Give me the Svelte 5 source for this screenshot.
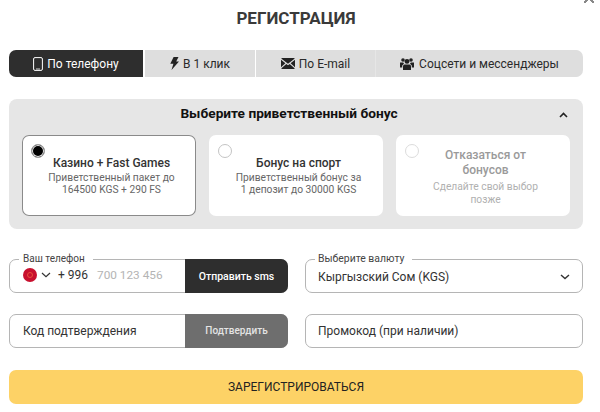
<script lang="ts">
	const tabs = [
		{ id: 'phone', label: 'По телефону' },
		{ id: 'bolt', label: 'В 1 клик' },
		{ id: 'mail', label: 'По E-mail' },
		{ id: 'users', label: 'Соцсети и мессенджеры' }
	];
</script>

<div class="page">
	<span class="close" aria-hidden="true"></span>
	<h1>РЕГИСТРАЦИЯ</h1>

	<nav class="tabs">
		{#each tabs as tab, i}
			<button class="tab" class:active={i === 0}>
				{#if tab.id === 'phone'}
					<svg width="10" height="14" viewBox="0 0 10 14"><rect x="0.6" y="0.6" width="8.8" height="12.8" rx="1.4" fill="none" stroke="currentColor" stroke-width="1" /><path d="M3 12h4" stroke="currentColor" stroke-width="0.8" /></svg>
				{:else if tab.id === 'bolt'}
					<svg width="9" height="13" viewBox="0 0 9 13"><path d="M3.6 0h4.9L6.200 4.400H9L1.500 13l1.900-6.300H0.300z" fill="#222" /></svg>
				{:else if tab.id === 'mail'}
					<svg width="14" height="11" viewBox="0 0 14 11"><path d="M1 0h12a1 1 0 0 1 .8.400L7 5.800.2.400A1 1 0 0 1 1 0zM0 1.700 4.400 5.200 0 9.200zM14 1.700v7.500L9.600 5.200zM5.300 6 7 7.300 8.700 6 13.800 10.600a1 1 0 0 1-.8.400H1a1 1 0 0 1-.8-.400z" fill="#222" /></svg>
				{:else}
					<svg width="14" height="12" viewBox="0 0 14 12"><circle cx="7" cy="3.400" r="2.400" fill="#222" /><circle cx="3" cy="2" r="1.800" fill="#222" /><circle cx="11" cy="2" r="1.800" fill="#222" /><path d="M4.500 6.400h5c1 0 1.500 1 1.500 2.200V12H3V8.600C3 7.400 3.500 6.400 4.500 6.400z" fill="#222" /><path d="M0 4.400h3.200L4 5.800 2.200 7.600V9.500H0zM14 4.400h-3.200L10 5.800l1.800 1.800V9.500H14z" fill="#222" /></svg>
				{/if}
				<span>{tab.label}</span>
			</button>
		{/each}
	</nav>

	<section class="bonus">
		<header>
			<strong>Выберите приветственный бонус</strong>
			<svg class="caret" width="9" height="6" viewBox="0 0 9 6"><path d="M1 5l3.500-3.500L8 5" fill="none" stroke="#222" stroke-width="1.600" /></svg>
		</header>
		<div class="cards">
			<article class="card selected">
				<span class="radio on"></span>
				<h2>Казино + Fast Games</h2>
				<p>Приветственный пакет до<br />164500 KGS + 290 FS</p>
			</article>
			<article class="card">
				<span class="radio"></span>
				<h2>Бонус на спорт</h2>
				<p>Приветственный бонус за<br />1 депозит до 30000 KGS</p>
			</article>
			<article class="card muted">
				<span class="radio"></span>
				<h2>Отказаться от<br />бонусов</h2>
				<p>Сделайте свой выбор<br />позже</p>
			</article>
		</div>
	</section>

	<div class="form">
		<div class="field phone">
			<span class="legend">Ваш телефон</span>
			<span class="flag"><i></i></span>
			<svg class="chev" width="10" height="6" viewBox="0 0 10 6"><path d="M1 1l4 3.600L9 1" fill="none" stroke="#333" stroke-width="1.200" /></svg>
			<span class="code">+ 996</span>
			<span class="hint">700 123 456</span>
			<button class="action dark">Отправить sms</button>
		</div>
		<div class="field select">
			<span class="legend wide">Выберите валюту</span>
			<span class="value">Кыргызский Сом (KGS)</span>
			<svg class="chev" width="10" height="6" viewBox="0 0 10 6"><path d="M1 1l4 3.600L9 1" fill="none" stroke="#333" stroke-width="1.400" /></svg>
		</div>
		<div class="field plain">
			<span class="value">Код подтверждения</span>
			<button class="action grey">Подтвердить</button>
		</div>
		<div class="field plain promo">
			<span class="value">Промокод (при наличии)</span>
		</div>
	</div>

	<button class="submit">ЗАРЕГИСТРИРОВАТЬСЯ</button>
</div>

<style>
	:global(body) {
		margin: 0;
		background: #fff;
		font-family: Roboto, 'Liberation Sans', sans-serif;
		color: #222;
	}
	.page {
		position: relative;
		width: 600px;
		height: 412px;
		box-sizing: border-box;
		padding: 8px 17px 0 9px;
		overflow: hidden;
	}
	.close {
		position: absolute;
		top: -7px;
		right: 6px;
		width: 10px;
		height: 10px;
		background:
			linear-gradient(45deg, transparent 44%, #888 44%, #888 56%, transparent 56%),
			linear-gradient(-45deg, transparent 44%, #888 44%, #888 56%, transparent 56%);
	}
	h1 {
		margin: 0;
		height: 20px;
		font-size: 17px;
		line-height: 20px;
		font-weight: 700;
		text-align: center;
		color: #3a3a3a;
	}
	button {
		font-family: inherit;
		border: 0;
		padding: 0;
	}
	.tabs {
		display: grid;
		grid-template-columns: 135px 110px 119px 1fr;
		gap: 1px;
		margin-top: 22px;
		height: 27px;
	}
	.tab {
		display: flex;
		align-items: center;
		justify-content: center;
		gap: 4px;
		background: #dedede;
		color: #2a2a2a;
		font-size: 12px;
	}
	.tab:first-child {
		margin-right: 1px;
		border-radius: 7px 0 0 7px;
	}
	.tab:last-child {
		box-shadow: -1px 0 0 #e6e6e6;
		border-radius: 0 7px 7px 0;
		gap: 5px;
	}
	.tab.active {
		background: #2e2e2e;
		color: #fff;
	}
	.bonus {
		margin-top: 22px;
		height: 130px;
		box-sizing: border-box;
		padding: 0 13px;
		background: #e6e6e6;
		border-radius: 8px;
	}
	.bonus header {
		position: relative;
		height: 36px;
		display: flex;
		align-items: center;
		justify-content: center;
		padding: 1px 14px 9px 0;
		box-sizing: border-box;
		font-size: 13.7px;
		color: #111;
	}
	.caret {
		position: absolute;
		right: 2px;
		top: 13px;
	}
	.cards {
		display: grid;
		grid-template-columns: repeat(3, 174px);
		gap: 13px;
	}
	.card {
		position: relative;
		height: 81px;
		box-sizing: border-box;
		padding: 21px 3px 0 8px;
		background: #fff;
		border-radius: 7px;
		text-align: center;
	}
	.card.selected {
		box-shadow: inset 0 0 0 1px #8a8a8a;
	}
	.card h2 {
		margin: 0;
		font-size: 12px;
		line-height: 14px;
		font-weight: 500;
		color: #333;
	}
	.card p {
		margin: 2px 0 0;
		font-size: 10.25px;
		line-height: 12px;
		color: #666;
	}
	.card.muted {
		padding-top: 13px;
	}
	.card.muted h2 {
		line-height: 15px;
		color: #9a9a9a;
	}
	.card.muted p {
		line-height: 13px;
		color: #b0b0b0;
	}
	.radio {
		position: absolute;
		left: 9px;
		top: 9px;
		width: 14px;
		height: 14px;
		box-sizing: border-box;
		border: 1px solid #c4c4c4;
		border-radius: 50%;
		background: #fff;
	}
	.muted .radio {
		border-color: #dcdcdc;
	}
	.radio.on {
		border-color: #a0a0a0;
		background: #000;
		box-shadow: inset 0 0 0 1px #ececec;
	}
	.form {
		display: grid;
		grid-template-columns: 279px 278px;
		column-gap: 17px;
		row-gap: 21px;
		margin-top: 30px;
	}
	.field {
		position: relative;
		display: flex;
		align-items: center;
		height: 34px;
		box-sizing: border-box;
		border: 1px solid #b5b5b5;
		border-radius: 7px;
		font-size: 12px;
		color: #333;
	}
	.legend {
		position: absolute;
		left: 9px;
		top: -7px;
		padding: 0 8px 0 4px;
		background: #fff;
		font-size: 10px;
		line-height: 12px;
		color: #444;
	}
	.legend.wide {
		font-size: 10.4px;
		padding-left: 3px;
	}
	.phone {
		padding: 0 0 2px 13px;
	}
	.flag {
		display: flex;
		align-items: center;
		justify-content: center;
		width: 14px;
		height: 14px;
		border-radius: 50%;
		background: #c8102e;
	}
	.flag i {
		width: 4px;
		height: 4px;
		border-radius: 50%;
		border: 1px solid #e8503a;
	}
	.phone .chev {
		margin-left: 4px;
	}
	.code {
		margin-left: 7px;
	}
	.hint {
		margin-left: 9px;
		font-size: 11.8px;
		color: #b4b4b4;
	}
	.action {
		position: absolute;
		top: -1px;
		right: -1px;
		bottom: -1px;
		width: 103px;
		border-radius: 0 7px 7px 0;
		color: #fff;
		font-size: 10.5px;
		font-weight: 500;
	}
	.dark {
		background: #2e2e2e;
	}
	.grey {
		background: #6e6e6e;
		color: #e4e4e4;
		font-size: 10px;
		padding-bottom: 1px;
	}
	.select {
		justify-content: space-between;
		padding: 1px 12px 0 12px;
	}
	.plain {
		padding-left: 13px;
	}
	.promo {
		padding-left: 12px;
	}
	.submit {
		display: block;
		width: 574px;
		height: 34px;
		margin-top: 22px;
		background: #fdd266;
		border-radius: 7px;
		font-size: 12px;
		color: #222;
	}
</style>
